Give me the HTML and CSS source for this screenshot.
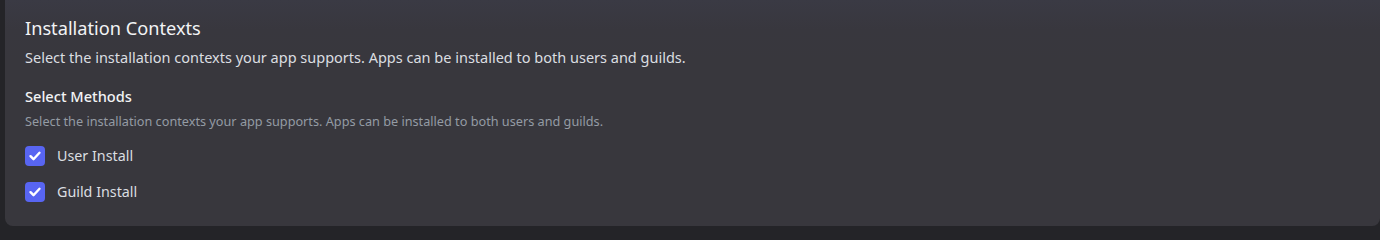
FILE: index.html
```html
<!DOCTYPE html>
<html>
<head>
<meta charset="utf-8">
<link rel="stylesheet" href="styles.css">
</head>
<body>
<section class="card">
  <h2 class="title">Installation Contexts</h2>
  <p class="desc">Select the installation contexts your app supports. Apps can be installed to both users and guilds.</p>
  <div class="group">
    <h3 class="group-title">Select Methods</h3>
    <p class="group-desc">Select the installation contexts your app supports. Apps can be installed to both users and guilds.</p>
    <ul class="options">
      <li class="option">
        <span class="box"><svg viewBox="0 0 20 20" width="20" height="20"><path d="M5.5 10.2l3 3 6-6.4" fill="none" stroke="#fff" stroke-width="2.4" stroke-linecap="round" stroke-linejoin="round"/></svg></span>
        <span class="label">User Install</span>
      </li>
      <li class="option">
        <span class="box"><svg viewBox="0 0 20 20" width="20" height="20"><path d="M5.5 10.2l3 3 6-6.4" fill="none" stroke="#fff" stroke-width="2.4" stroke-linecap="round" stroke-linejoin="round"/></svg></span>
        <span class="label">Guild Install</span>
      </li>
    </ul>
  </div>
</section>
</body>
</html>
```
FILE: styles.css
```css
html, body {
  margin: 0;
  padding: 0;
}
body {
  background: #242428;
  font-family: "Noto Sans", "Open Sans", sans-serif;
  height: 240px;
  overflow: hidden;
}
.card {
  margin-left: 5px;
  height: 226px;
  box-sizing: border-box;
  background: linear-gradient(#3a3a44 0px, #38373e 30px, #38373d 60px);
  border-radius: 0 0 8px 8px;
  padding: 16px 20px 0 20px;
}
.title {
  margin: 0;
  font-size: 18.2px;
  font-weight: 400;
  line-height: 24px;
  color: #f2f3f5;
}
.desc {
  margin: 7px 0 0;
  font-size: 14.5px;
  line-height: 20px;
  color: #dbdee1;
}
.group {
  margin-top: 19px;
}
.group-title {
  margin: 0;
  font-size: 14.6px;
  font-weight: 500;
  line-height: 20px;
  color: #f2f3f5;
}
.group-desc {
  margin: 7px 0 0;
  font-size: 12.7px;
  line-height: 16px;
  color: #949ba4;
}
.options {
  list-style: none;
  margin: 17px 0 0;
  padding: 0;
  display: flex;
  flex-direction: column;
  gap: 16px;
}
.option {
  display: flex;
  align-items: center;
  gap: 12px;
  height: 20px;
}
.box {
  width: 20px;
  height: 20px;
  border-radius: 4px;
  background: #5865f2;
  display: flex;
}
.label {
  font-size: 14.3px;
  line-height: 20px;
  color: #dbdee1;
}
```
